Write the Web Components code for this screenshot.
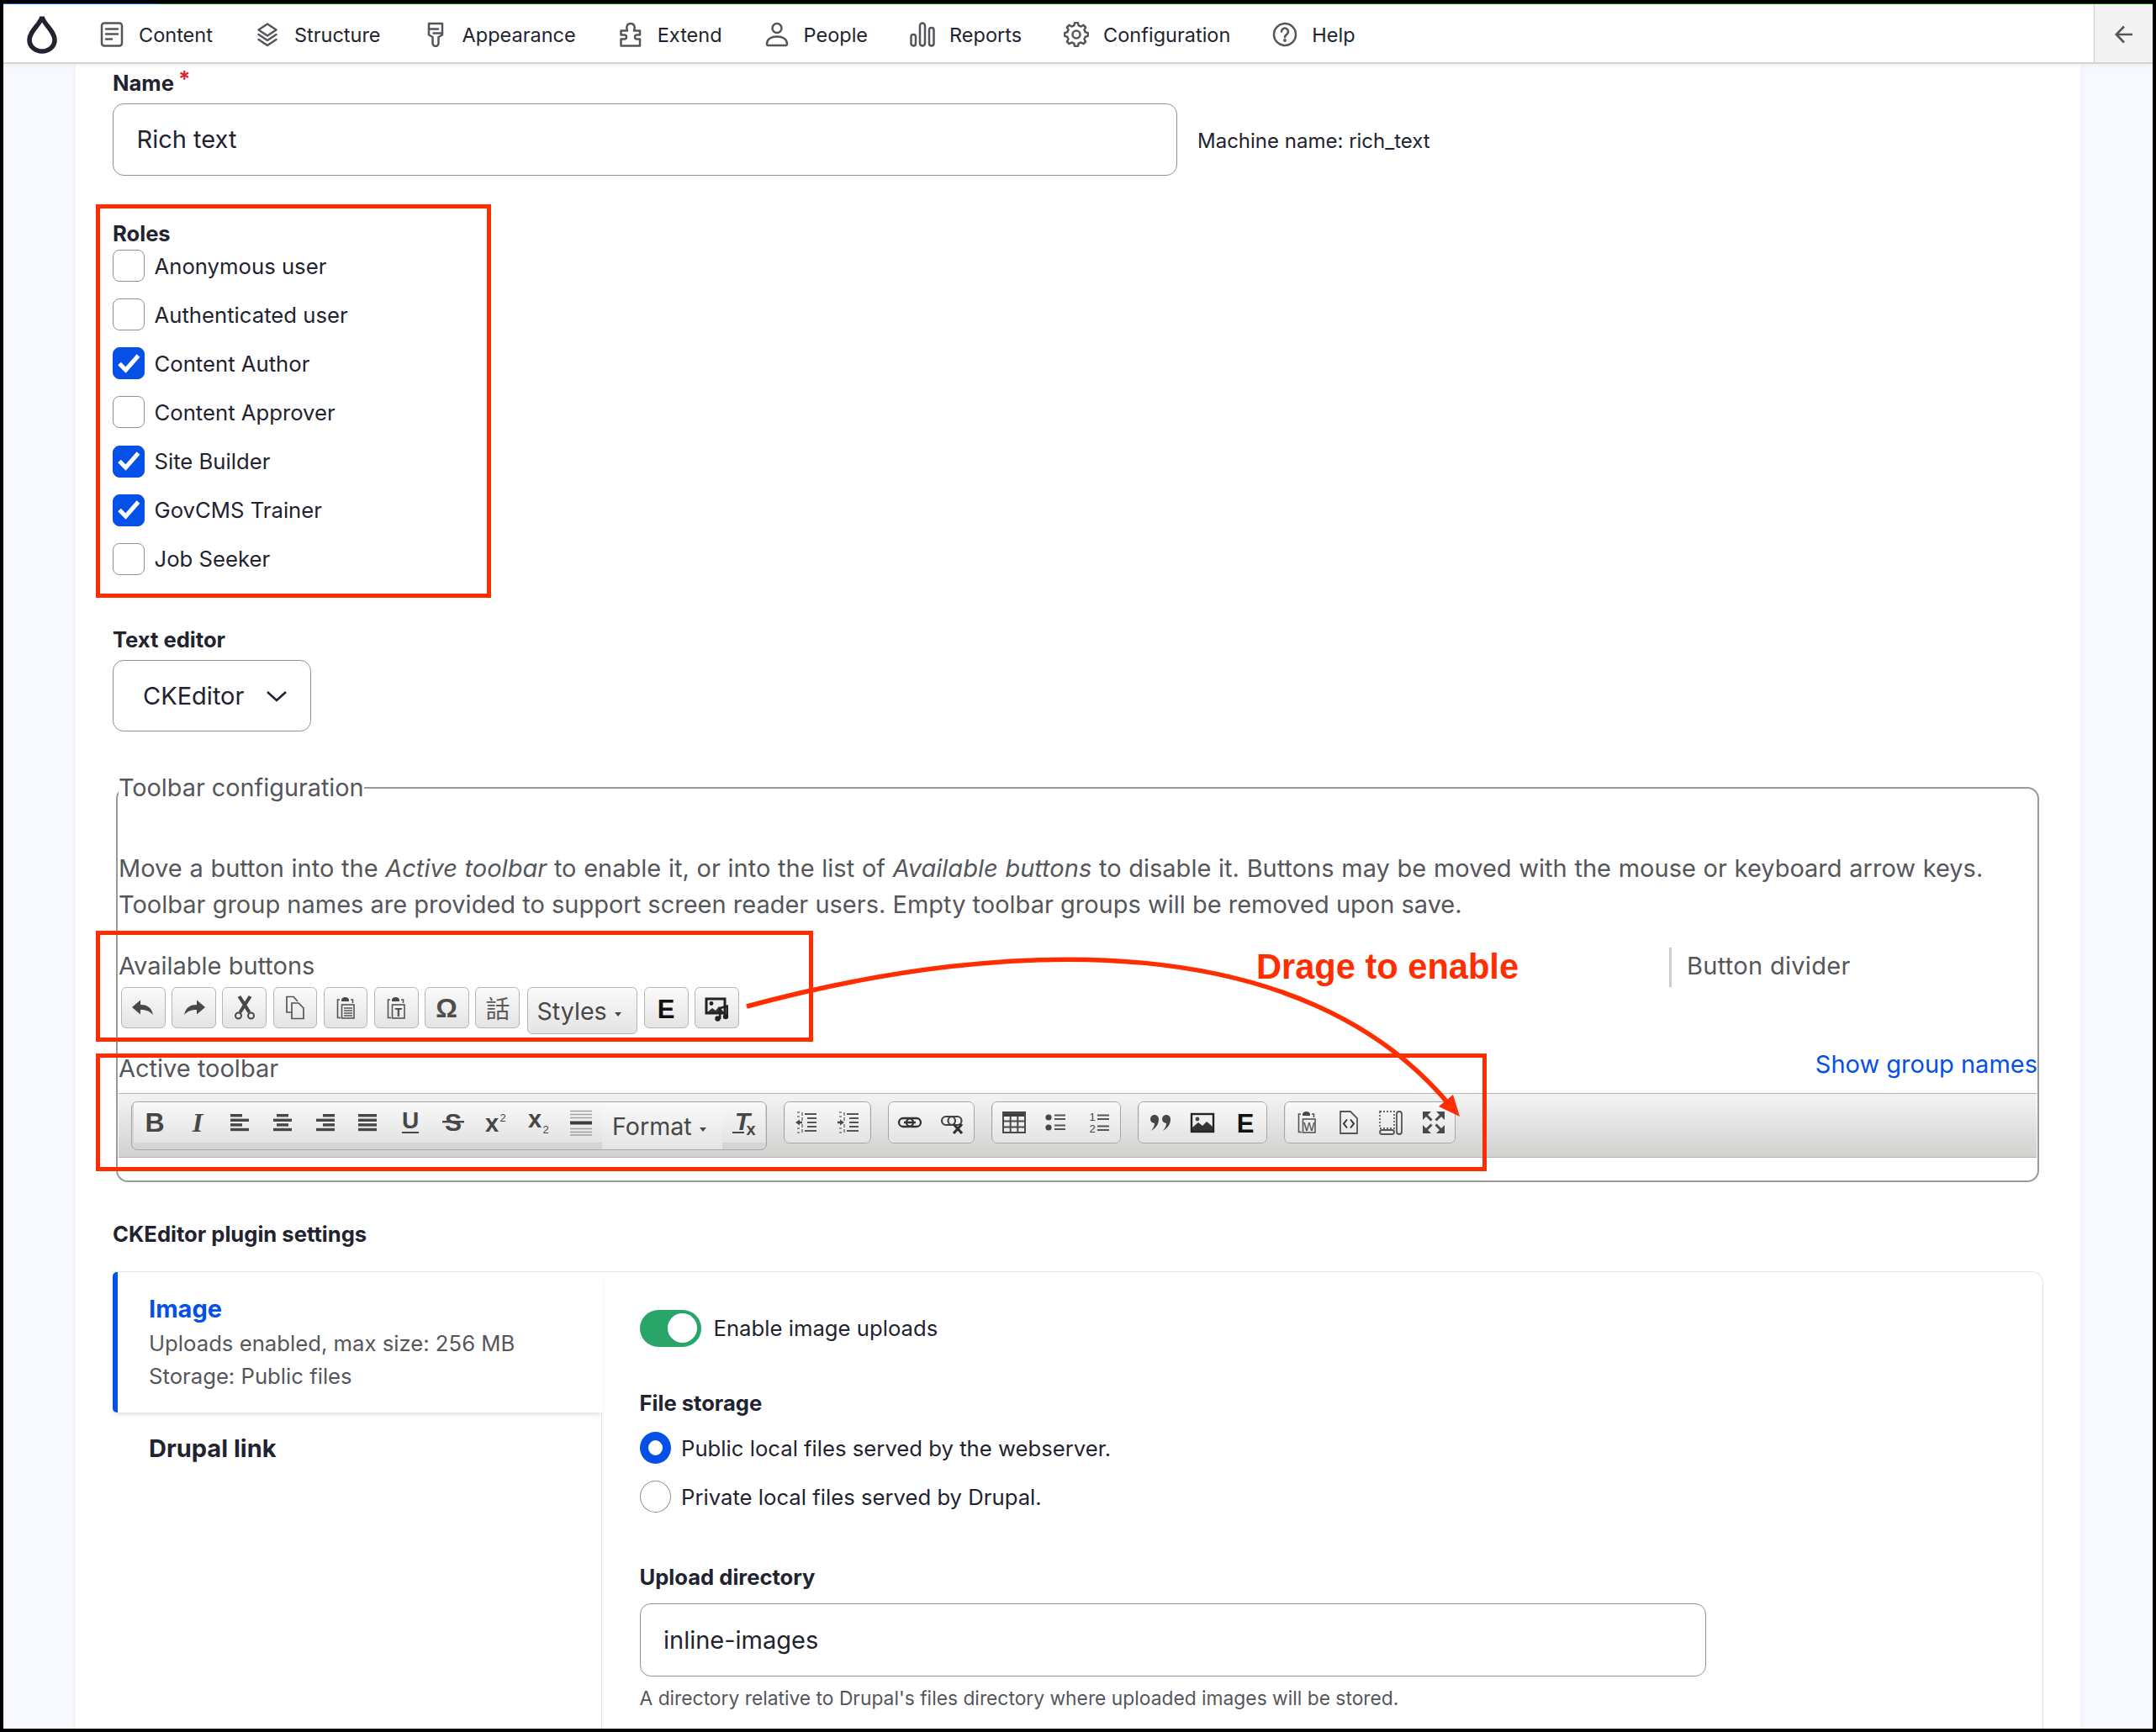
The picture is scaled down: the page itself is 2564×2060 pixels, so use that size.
<!doctype html>
<html>
<head>
<meta charset="utf-8">
<title>Rich text</title>
<style>
  html, body { margin: 0; padding: 0; background: #000; }
  body { position: relative; width: 2564px; height: 2060px; overflow: hidden; font-family: Inter, "Liberation Sans", sans-serif; color: #222330; }
</style>
</head>
<body>
<x-app>
  <x-admin-bar>
    <x-nav-item icon="content">Content</x-nav-item>
    <x-nav-item icon="structure">Structure</x-nav-item>
    <x-nav-item icon="appearance">Appearance</x-nav-item>
    <x-nav-item icon="extend">Extend</x-nav-item>
    <x-nav-item icon="people">People</x-nav-item>
    <x-nav-item icon="reports">Reports</x-nav-item>
    <x-nav-item icon="config">Configuration</x-nav-item>
    <x-nav-item icon="help">Help</x-nav-item>
  </x-admin-bar>
  <x-format-form></x-format-form>
</x-app>
<x-annotations></x-annotations>

<script>
// gear outline for the Configuration item
function gearPath(cx, cy, r1, r2, teeth) {
  let d = '';
  const step = Math.PI * 2 / teeth;
  for (let i = 0; i < teeth; i++) {
    const a = i * step - Math.PI / 2;
    const pts = [[a - step * .32, r1], [a - step * .17, r2], [a + step * .17, r2], [a + step * .32, r1]];
    pts.forEach((p, j) => {
      const x = (cx + Math.cos(p[0]) * p[1]).toFixed(1);
      const y = (cy + Math.sin(p[0]) * p[1]).toFixed(1);
      d += (i === 0 && j === 0 ? 'M' : 'L') + x + ' ' + y + ' ';
    });
  }
  return d + 'Z';
}

const NAV_ICONS = {
  content: '<rect x="3" y="1.5" width="24" height="27" rx="3"/><path d="M8 8.5H22M8 14.5H22M8 20.5H15"/>',
  structure: '<path d="M15 2.5 25.5 9.5 15 16.5 4.5 9.5Z"/><path d="M4.5 15 15 22 25.5 15M4.5 21 15 28 25.5 21"/>',
  appearance: '<path d="M7 2h16v13.5l-4.5 2.5v7.5a3.5 3.5 0 0 1-7 0V18L7 15.5Z"/><path d="M7 8.5h11M12.5 13.5H23"/>',
  extend: '<path d="M3.5 28.5V20.5H7.5a2.5 2.5 0 0 0 0-5H3.5V10.5H11C9 6 11 2 15 2S21 6 19 10.5H26V15.5H22.5a2.5 2.5 0 0 0 0 5H26V28.5Z"/>',
  people: '<circle cx="15" cy="7.5" r="5.5"/><path d="M3 26.5c0-6 5-9 12-9s12 3 12 9a1.5 1.5 0 0 1-1.5 1.5h-21A1.5 1.5 0 0 1 3 26.5Z"/>',
  reports: '<rect x="1.5" y="15" width="5.5" height="13.5" rx="2.7"/><rect x="12" y="1.5" width="6" height="27" rx="3"/><rect x="23" y="7" width="5.5" height="21.5" rx="2.7"/>',
  config: `<path d="${gearPath(15, 15, 11, 14, 8)}"/><circle cx="15" cy="15" r="4.5"/>`,
  help: '<circle cx="15" cy="15" r="13"/><path d="M11 11.5a4 4 0 1 1 6.2 3.4c-1.5 1-2.2 1.6-2.2 3.4"/><circle cx="15" cy="22" r=".8"/>'
};

const bars = rows => rows.map((r, i) => `<rect x="${r[0]}" y="${6 + i * 5.6}" width="${r[1]}" height="3.4"/>`).join('');
const txt = (s, x, y, size, extra = '') => `<text x="${x}" y="${y}" font-size="${size}" ${extra}>${s}</text>`;
const SANS = 'font-family="Liberation Sans" font-weight="700"';
const clip = '<path d="M9 6H6.5V27.5H10" fill="none" stroke-width="1.6" stroke="#555"/><path d="M22 6H24.5V10" fill="none" stroke-width="1.6" stroke="#555"/><path d="M11 6.5c0-2 2-3.5 4.5-3.5s4.5 1.5 4.5 3.5V8H11Z"/><rect x="11.5" y="12" width="14.5" height="16" fill="none" stroke="#555" stroke-width="1.6"/>';

const CK_ICONS = {
  undo: '<path d="M3 15 13 6.5V12C21 12 26 15 28 24 24 19.5 19 18 13 18V23.5Z"/>',
  redo: '<path d="M29 15 19 6.5V12C11 12 6 15 4 24 8 19.5 13 18 19 18V23.5Z"/>',
  cut: '<path d="M9.5 2 21.5 21M22.5 2 10.5 21" stroke="#474747" stroke-width="4.2"/><circle cx="8.5" cy="25" r="3.5" fill="none" stroke="#474747" stroke-width="2"/><circle cx="23.5" cy="25" r="3.5" fill="none" stroke="#474747" stroke-width="2"/>',
  copy: '<g fill="none" stroke="#555" stroke-width="1.7"><path d="M12 21H6V2.5H14L19 8"/><path d="M12 10H20L26 16V28.5H12Z"/></g>',
  paste: clip + '<path d="M14 16H24M14 19H24M14 22H24M14 25H24" stroke="#555" stroke-width="1.5"/>',
  pastetext: clip + txt('T', 14.5, 26, 14, SANS + ' fill="#474747"'),
  omega: txt('Ω', 16, 27, 32, 'text-anchor="middle" font-family="Liberation Sans" font-weight="700" fill="#4d4d4d"'),
  language: txt('話', 16, 28, 29, 'text-anchor="middle" font-family="Noto Sans CJK TC" fill="#5a5a5a"'),
  e: txt('E', 16, 28, 31, 'text-anchor="middle" ' + SANS + ' fill="#111"'),
  media: '<rect x="3" y="5" width="22" height="17" fill="#eee" stroke="#222" stroke-width="3"/><circle cx="9" cy="10.5" r="2.4" fill="#222"/><path d="M4 21l6-5 4 3 4-5 6 7Z" fill="#333"/><path d="M18 15l11-3v14h-2.5V15.5l-6 1.6V29H18Z" fill="#222"/><circle cx="16.5" cy="28.5" r="3.2" fill="#222"/><circle cx="26" cy="26" r="3.2" fill="#222"/>',
  bold: txt('B', 16, 27, 32, 'text-anchor="middle" ' + SANS),
  italic: txt('I', 16, 27, 32, 'text-anchor="middle" font-family="Liberation Serif" font-weight="700" font-style="italic"'),
  left: bars([[5, 14], [5, 22], [5, 14], [5, 22]]),
  center: bars([[9, 14], [5, 22], [9, 14], [5, 22]]),
  right: bars([[13, 14], [5, 22], [13, 14], [5, 22]]),
  justify: bars([[5, 22], [5, 22], [5, 22], [5, 22]]),
  underline: txt('U', 16, 23, 28, 'text-anchor="middle" ' + SANS) + '<rect x="6" y="27" width="20" height="2"/>',
  strike: txt('S', 16, 26, 30, 'text-anchor="middle" ' + SANS) + '<rect x="3" y="14" width="26" height="2.4"/>',
  sup: txt('x', 12, 27, 29, 'text-anchor="middle" ' + SANS) + txt('2', 25, 15, 13, 'text-anchor="middle" font-family="Liberation Sans"'),
  sub: txt('x', 12, 22, 29, 'text-anchor="middle" ' + SANS) + txt('2', 25, 29, 13, 'text-anchor="middle" font-family="Liberation Sans"'),
  hr: '<path d="M3 2.5H29M3 6.5H29M3 10.5H29M3 23.5H29M3 27.5H29M3 31H29" stroke="#a0a0a0" stroke-width="1.6"/><rect x="3" y="14.5" width="26" height="4" fill="#3c3c3c"/>',
  clear: txt('T', 15, 25, 30, SANS + ' font-style="italic" text-anchor="middle" font-family="Liberation Serif"') + '<rect x="3" y="27" width="14" height="2"/>' + txt('x', 25, 31, 20, 'text-anchor="middle" ' + SANS),
  outdent: '<path d="M14 6H28M17 11H28M17 16H28M17 21H28M14 26H28" stroke="#555" stroke-width="2"/><path d="M11 4V8M11 10V14M11 18V22M11 24V28M5 4H8M5 9H8M5 23H8M5 28H8" stroke="#777" stroke-width="1.5"/><path d="M3 16 8 12.5V14.8H11V17.2H8V19.5Z"/>',
  indent: '<path d="M14 6H28M17 11H28M17 16H28M17 21H28M14 26H28" stroke="#555" stroke-width="2"/><path d="M11 4V8M11 10V14M11 18V22M11 24V28M5 4H8M5 9H8M5 23H8M5 28H8" stroke="#777" stroke-width="1.5"/><path d="M11 16 6 12.5V14.8H3V17.2H6V19.5Z"/>',
  link: '<g fill="none" stroke="#333" stroke-width="2.3"><rect x="3" y="11" width="17" height="10" rx="5"/><rect x="12" y="11" width="17" height="10" rx="5"/></g><path d="M9 16H23" stroke="#333" stroke-width="2.3"/>',
  unlink: '<g fill="none" stroke="#444" stroke-width="2.2"><rect x="3" y="9" width="16" height="10" rx="5"/><rect x="10.5" y="9" width="16" height="10" rx="5"/></g><path d="M17 18 27 29M27 18 17 29" stroke="#333" stroke-width="3.2"/>',
  table: '<rect x="2" y="3" width="28" height="6" fill="#3e3e3e"/><g fill="none" stroke="#4a4a4a" stroke-width="2"><rect x="3" y="5" width="26" height="23"/><path d="M11.7 8V28M20.3 8V28M3 14.5H29M3 21.5H29"/></g>',
  bullets: '<circle cx="7" cy="10" r="3.6"/><circle cx="7" cy="22" r="3.6"/><path d="M14 7.5H27M14 12H27M14 19.5H27M14 24H27" stroke="#555" stroke-width="2"/>',
  numbers: txt('1', 8, 14, 13, 'text-anchor="middle" font-family="Liberation Sans"') + txt('2', 8, 28, 13, 'text-anchor="middle" font-family="Liberation Sans"') + '<path d="M14 7.5H28M14 12H28M14 20.5H28M14 25H28" stroke="#555" stroke-width="2"/>',
  quote: '<circle cx="9" cy="12" r="5"/><path d="M14 12C14 19 10 23 5 26 8 22 9.5 19 9 16Z"/><circle cx="23" cy="12" r="5"/><path d="M28 12C28 19 24 23 19 26 22 22 23.5 19 23 16Z"/>',
  image: '<rect x="3" y="6" width="26" height="21" fill="none" stroke="#222" stroke-width="2.4"/><circle cx="10" cy="12" r="2.4"/><path d="M4 26V22L11 16 16 20 21 15 28 21V26Z" fill="#333"/>',
  paste_word: clip + txt('W', 18.8, 26, 14, 'text-anchor="middle" font-family="Liberation Sans" fill="#474747"'),
  source: '<path d="M6 3H18L26 11V29H6Z" fill="none" stroke="#555" stroke-width="1.8"/><path d="M14 12.5 10 17.5 14 22.5M18 12.5 22 17.5 18 22.5" fill="none" stroke="#333" stroke-width="2"/>',
  blocks: '<rect x="3" y="3" width="17" height="20" fill="none" stroke="#666" stroke-width="1.8" stroke-dasharray="2 2"/><rect x="23" y="3" width="6" height="27" rx="3" fill="none" stroke="#555" stroke-width="1.8"/><rect x="3" y="25" width="17" height="5" rx="2.5" fill="none" stroke="#555" stroke-width="1.8"/>',
  maximize: '<g fill="#4a4a4a"><path d="M3 3H13L3 13ZM29 3V13L19 3ZM3 29V19L13 29ZM29 29H19L29 19Z"/></g><path d="M6 6 13.5 13.5M26 6 18.5 13.5M6 26 13.5 18.5M26 26 18.5 18.5" stroke="#4a4a4a" stroke-width="3"/>'
};

class App extends HTMLElement {
  constructor() {
    super();
    this.attachShadow({ mode: 'open' }).innerHTML = `
      <style>
        :host { display: flex; flex-direction: column; box-sizing: border-box; width: 2564px; height: 2060px; border: 4px solid #000; background: #f8f9fe; overflow: hidden; }
      </style>
      <slot></slot>`;
  }
}

class AdminBar extends HTMLElement {
  constructor() {
    super();
    this.attachShadow({ mode: 'open' }).innerHTML = `
      <style>
        :host { display: flex; flex: none; align-items: stretch; box-sizing: border-box; height: 72px; background: #fff; position: relative; z-index: 2;
          border-bottom: 2px solid #d4d4d4; box-shadow: 0 2px 6px rgba(0,0,0,.05); }
        .line { position: absolute; left: 0; right: 0; top: 0; height: 1px; background: linear-gradient(90deg, #0550e6 184px, #006400 184px); }
        .logo { flex: none; width: 38px; height: 48px; margin: 12px 49px 0 27px; }
        nav { display: flex; align-items: center; gap: 50px; padding-top: 4px; }
        .back { margin-left: auto; flex: none; width: 70px; display: flex; align-items: center; justify-content: center; padding-top: 3px; background: #f3f3f3; border-left: 1.5px solid #ccc; box-sizing: border-box; }
      </style>
      <div class="line"></div>
      <svg class="logo" viewBox="0 0 38 48" fill="none" stroke="#222330" stroke-width="5.6">
        <path d="M19 4C17 13 4 21 4 31.5 4 39.5 11 45 19 45S34 39.5 34 31.5C34 21 21 13 19 4Z"/>
      </svg>
      <nav><slot></slot></nav>
      <div class="back">
        <svg width="24" height="24" viewBox="0 0 24 24" fill="none" stroke="#55565b" stroke-width="2.6"><path d="M22 12H3M12 2.5 2.8 12 12 21.5"/></svg>
      </div>`;
  }
}

class NavItem extends HTMLElement {
  constructor() {
    super();
    this.attachShadow({ mode: 'open' }).innerHTML = `
      <style>
        :host { display: flex; align-items: center; gap: 17px; font-size: 23.5px; color: #222330; white-space: nowrap; }
        svg { flex: none; width: 30px; height: 30px; }
      </style>
      <svg viewBox="0 0 30 30" fill="none" stroke="#55565b" stroke-width="2.5" stroke-linejoin="round" stroke-linecap="round">${NAV_ICONS[this.getAttribute('icon')]}</svg>
      <slot></slot>`;
  }
}

class Label extends HTMLElement {
  constructor() {
    super();
    this.attachShadow({ mode: 'open' }).innerHTML = `
      <style>
        :host { display: block; font-size: 25.6px; font-weight: 700; line-height: 30px; color: #222330; }
        :host([required]) .star { display: inline; }
        .star { display: none; color: #d8242f; margin-left: 5px; vertical-align: 5px; font-size: 26px; line-height: 0; }
      </style>
      <slot></slot><span class="star">*</span>`;
  }
}

class TextBox extends HTMLElement {
  constructor() {
    super();
    this.attachShadow({ mode: 'open' }).innerHTML = `
      <style>
        :host { display: flex; align-items: center; box-sizing: border-box; height: 86px; padding: 0 27.5px; border: 1.5px solid #8e929c; border-radius: 13px; background: #fff; font-size: 29px; color: #222330; }
      </style>
      <slot></slot>`;
  }
}

class SelectBox extends HTMLElement {
  constructor() {
    super();
    this.attachShadow({ mode: 'open' }).innerHTML = `
      <style>
        :host { display: flex; align-items: center; justify-content: space-between; box-sizing: border-box; width: 236px; height: 85px; padding: 0 27px 0 35px; border: 1.5px solid #8e929c; border-radius: 13px; font-size: 29px; color: #222330; }
      </style>
      <slot></slot>
      <svg width="26" height="14" viewBox="0 0 26 14" fill="none" stroke="#222330" stroke-width="2.6"><path d="M2 2 13 12 24 2"/></svg>`;
  }
}

class CheckBox extends HTMLElement {
  constructor() {
    super();
    this.attachShadow({ mode: 'open' }).innerHTML = `
      <style>
        :host { display: flex; align-items: center; gap: 11.5px; height: 38px; font-size: 25.7px; color: #222330; }
        .box { flex: none; box-sizing: border-box; width: 38px; height: 38px; border: 1.5px solid #8e929c; border-radius: 8px; background: #fff; }
        svg { display: none; }
        :host([checked]) .box { background: #0550e6; border-color: #0550e6; }
        :host([checked]) svg { display: block; margin: -1.5px; }
      </style>
      <div class="box"><svg width="38" height="38" viewBox="0 0 38 38" fill="none" stroke="#fff" stroke-width="5"><path d="M8 19.5 15.5 27 30.5 10"/></svg></div>
      <slot></slot>`;
  }
}

class RadioBox extends HTMLElement {
  constructor() {
    super();
    this.attachShadow({ mode: 'open' }).innerHTML = `
      <style>
        :host { display: flex; align-items: center; gap: 12.5px; height: 38px; font-size: 25.7px; color: #222330; }
        .dot { flex: none; box-sizing: border-box; width: 37px; height: 38px; border-radius: 50%; border: 1.5px solid #8e929c; background: #fff; }
        :host([checked]) .dot { border: 10px solid #0550e6; }
      </style>
      <div class="dot"></div>
      <slot></slot>`;
  }
}

class ToggleSwitch extends HTMLElement {
  constructor() {
    super();
    this.attachShadow({ mode: 'open' }).innerHTML = `
      <style>
        :host { display: flex; align-items: center; gap: 15px; font-size: 25.7px; color: #222330; }
        .track { flex: none; display: flex; justify-content: flex-end; align-items: center; box-sizing: border-box; width: 73px; height: 44px; padding-right: 5px; border-radius: 22px; background: #2aa56a; }
        .knob { width: 35px; height: 35px; border-radius: 50%; background: #fff; }
      </style>
      <div class="track"><div class="knob"></div></div>
      <slot></slot>`;
  }
}

class CkButton extends HTMLElement {
  constructor() {
    super();
    this.attachShadow({ mode: 'open' }).innerHTML = `
      <style>
        :host { display: flex; flex: none; align-items: center; justify-content: center; box-sizing: border-box; width: var(--ck-w, 50.7px); height: 48px; background: linear-gradient(#f9f9f9, #e3e3e3); }
        :host([boxed]) { width: 52.7px; height: 49px; border: 1px solid #b6b6b6; border-radius: 6px; background: linear-gradient(#fafafa, #e4e4e4); }
        svg { width: 32px; height: 32px; fill: #474747; overflow: visible; }
      </style>
      <svg viewBox="0 0 32 32">${CK_ICONS[this.getAttribute('icon')]}</svg>`;
  }
}

class CkCombo extends HTMLElement {
  constructor() {
    super();
    this.attachShadow({ mode: 'open' }).innerHTML = `
      <style>
        :host { display: flex; flex: none; align-items: center; gap: 9px; box-sizing: border-box; width: 143px; height: 56px; padding-left: 12px; font-size: 28.6px; color: #474747; background: linear-gradient(#f9f9f9, #e5e5e5); }
        :host([boxed]) { width: 131px; border: 1px solid #b6b6b6; border-radius: 6px; padding-left: 11px; background: linear-gradient(#fafafa, #e4e4e4); }
        .caret { width: 0; height: 0; margin-top: 9px; border: 4.5px solid transparent; border-top: 5px solid #474747; border-bottom: 0; }
      </style>
      <slot></slot><span class="caret"></span>`;
  }
}

class CkGroup extends HTMLElement {
  constructor() {
    super();
    this.attachShadow({ mode: 'open' }).innerHTML = `
      <style>
        :host { --ck-w: 50.3px; display: flex; flex: none; align-items: flex-start; align-self: flex-start; box-sizing: border-box; padding: 0 .5px; border: 1px solid #a6a6a6; border-radius: 7px; background: #e3e3e3; overflow: hidden; }
        :host([tall]) { --ck-w: 50.7px; padding: 0 1.5px; background: #d5d5d5; }
      </style>
      <slot></slot>`;
  }
}

class CkBar extends HTMLElement {
  constructor() {
    super();
    this.attachShadow({ mode: 'open' }).innerHTML = `
      <style>
        :host { display: flex; gap: 20px; box-sizing: border-box; height: 77px; padding: 9px 0 0 15px; border-top: 1.5px solid #b4b4b4; border-bottom: 1.5px solid #b4b4b4; background: linear-gradient(#f3f3f3, #d0d2cf); }
      </style>
      <slot></slot>`;
  }
}

class VerticalTab extends HTMLElement {
  constructor() {
    super();
    this.attachShadow({ mode: 'open' }).innerHTML = `
      <style>
        :host { display: block; box-sizing: border-box; padding: 20.5px 0 0 43px; }
        :host([active]) { height: 167px; padding: 22px 0 0 37px; border-left: 6px solid #0550e6; border-radius: 5px 0 0 5px; background: #fff; box-shadow: 0 4px 6px -2px rgba(0,0,0,.14); position: relative; z-index: 1; margin-right: -2px; }
        .title { font-size: 29px; font-weight: 700; line-height: 43px; color: #222330; }
        :host([active]) .title { color: #0550e6; }
        .sum { font-size: 25.7px; line-height: 39px; color: #55565b; }
      </style>
      <div class="title">${this.getAttribute('title')}</div>
      <div class="sum"><slot></slot></div>`;
    this.removeAttribute('title');
  }
}

class FormatForm extends HTMLElement {
  constructor() {
    super();
    this.attachShadow({ mode: 'open' }).innerHTML = `
      <style>
        :host { display: block; flex: 1; box-sizing: border-box; width: 2384px; margin-left: 86px; padding: 8px 0 0 44px; background: #fff; box-shadow: 0 0 8px rgba(0,0,20,.06); }
        .name-row { display: flex; align-items: center; gap: 24px; margin-top: 8.5px; font-size: 24px; }
        .name-row span { padding-top: 3px; }
        .name-row x-text-box { width: 1266px; }
        .roles { display: flex; flex-direction: column; gap: 20.17px; margin-top: 4.5px; }
        fieldset { box-sizing: border-box; width: 2287px; margin: 49px 0 0 4px; padding: 0 0 27px 1px; border: 2px solid #9a9a9a; border-radius: 14px; min-width: 0; color: #55565b; font-size: 29px; }
        legend { padding: 0; line-height: 35px; font-size: 28.8px; }
        .desc { margin: 56.5px 0 0; line-height: 43px; white-space: nowrap; }
        .desc .first { word-spacing: .57px; }
        .avail-head { display: flex; justify-content: space-between; height: 47px; margin-top: 30.5px; line-height: 43px; }
        .avail-head > span:last-child { display: block; width: 397px; margin-right: 41px; border-left: 3.5px solid #ccc; padding-left: 18px; height: 47px; box-sizing: border-box; letter-spacing: .3px; }
        .avail { display: flex; align-items: flex-start; gap: 7.5px; padding-left: 3px; height: 56px; }
        .avail .wide { margin: 0 1px; }
        .active-head { display: flex; justify-content: space-between; align-items: flex-start; height: 43px; margin-top: 14px; line-height: 43px; }
        .active-head span { padding-top: 5px; }
        a { color: #0550e6; text-decoration: none; }
        .active-head + x-ck-bar { margin-top: 13px; margin-right: 1px; }
        .section { margin-top: 47px; }
        .vtabs { display: grid; grid-template-columns: 581px 1fr; height: 600px; margin-top: 29px; width: 2296px; box-sizing: border-box; border-top: 1.5px solid #e6e6e6; border-right: 1.5px solid #e6e6e6; border-top-right-radius: 14px; }
        .panel { border-left: 1.5px solid #e6e6e6; padding: 44.5px 0 0 44.5px; }
        .storage { margin-top: 52.5px; }
        .radios { display: flex; flex-direction: column; gap: 20px; margin-top: 19px; }
        .upload { margin-top: 62px; }
        .upload + x-text-box { width: 1268px; height: 87px; margin-top: 16px; }
        .help { margin-top: 13px; font-size: 22.8px; line-height: 26px; color: #55565b; }
      </style>
      <x-field-label required>Name</x-field-label>
      <div class="name-row"><x-text-box>Rich text</x-text-box><span>Machine name: rich_text</span></div>

      <x-field-label style="margin-top:54px">Roles</x-field-label>
      <div class="roles">
        <x-check-box>Anonymous user</x-check-box>
        <x-check-box>Authenticated user</x-check-box>
        <x-check-box checked>Content Author</x-check-box>
        <x-check-box>Content Approver</x-check-box>
        <x-check-box checked>Site Builder</x-check-box>
        <x-check-box checked>GovCMS Trainer</x-check-box>
        <x-check-box>Job Seeker</x-check-box>
      </div>

      <x-field-label style="margin:62.5px 0 9px">Text editor</x-field-label>
      <x-select-box>CKEditor</x-select-box>

      <fieldset>
        <legend>Toolbar configuration</legend>
        <p class="desc"><span class="first">Move a button into the <em>Active toolbar</em> to enable it, or into the list of <em>Available buttons</em> to disable it. Buttons may be moved with the mouse or keyboard arrow keys.</span><br>Toolbar group names are provided to support screen reader users. Empty toolbar groups will be removed upon save.</p>

        <div class="avail-head"><span>Available buttons</span><span>Button divider</span></div>
        <div class="avail">
          <x-ck-button boxed icon="undo"></x-ck-button>
          <x-ck-button boxed icon="redo"></x-ck-button>
          <x-ck-button boxed icon="cut"></x-ck-button>
          <x-ck-button boxed icon="copy"></x-ck-button>
          <x-ck-button boxed icon="paste"></x-ck-button>
          <x-ck-button boxed icon="pastetext"></x-ck-button>
          <x-ck-button boxed icon="omega"></x-ck-button>
          <x-ck-button boxed icon="language"></x-ck-button>
          <x-ck-combo boxed class="wide">Styles</x-ck-combo>
          <x-ck-button boxed icon="e"></x-ck-button>
          <x-ck-button boxed icon="media"></x-ck-button>
        </div>

        <div class="active-head"><span>Active toolbar</span><a href="#">Show group names</a></div>
        <x-ck-bar>
          <x-ck-group tall>
            <x-ck-button icon="bold"></x-ck-button>
            <x-ck-button icon="italic"></x-ck-button>
            <x-ck-button icon="left"></x-ck-button>
            <x-ck-button icon="center"></x-ck-button>
            <x-ck-button icon="right"></x-ck-button>
            <x-ck-button icon="justify"></x-ck-button>
            <x-ck-button icon="underline"></x-ck-button>
            <x-ck-button icon="strike"></x-ck-button>
            <x-ck-button icon="sup"></x-ck-button>
            <x-ck-button icon="sub"></x-ck-button>
            <x-ck-button icon="hr"></x-ck-button>
            <x-ck-combo>Format</x-ck-combo>
            <x-ck-button icon="clear"></x-ck-button>
          </x-ck-group>
          <x-ck-group><x-ck-button icon="outdent"></x-ck-button><x-ck-button icon="indent"></x-ck-button></x-ck-group>
          <x-ck-group><x-ck-button icon="link"></x-ck-button><x-ck-button icon="unlink"></x-ck-button></x-ck-group>
          <x-ck-group><x-ck-button icon="table"></x-ck-button><x-ck-button icon="bullets"></x-ck-button><x-ck-button icon="numbers"></x-ck-button></x-ck-group>
          <x-ck-group><x-ck-button icon="quote"></x-ck-button><x-ck-button icon="image"></x-ck-button><x-ck-button icon="e"></x-ck-button></x-ck-group>
          <x-ck-group><x-ck-button icon="paste_word"></x-ck-button><x-ck-button icon="source"></x-ck-button><x-ck-button icon="blocks"></x-ck-button><x-ck-button icon="maximize"></x-ck-button></x-ck-group>
        </x-ck-bar>
      </fieldset>

      <x-field-label class="section">CKEditor plugin settings</x-field-label>
      <div class="vtabs">
        <div>
          <x-vertical-tab active title="Image">Uploads enabled, max size: 256 MB<br>Storage: Public files</x-vertical-tab>
          <x-vertical-tab title="Drupal link"></x-vertical-tab>
        </div>
        <div class="panel">
          <x-toggle-switch>Enable image uploads</x-toggle-switch>
          <x-field-label class="storage">File storage</x-field-label>
          <div class="radios">
            <x-radio-box checked>Public local files served by the webserver.</x-radio-box>
            <x-radio-box>Private local files served by Drupal.</x-radio-box>
          </div>
          <x-field-label class="upload">Upload directory</x-field-label>
          <x-text-box>inline-images</x-text-box>
          <div class="help">A directory relative to Drupal's files directory where uploaded images will be stored.</div>
        </div>
      </div>`;
  }
}

// red callouts drawn over the screenshot, free canvas
class Annotations extends HTMLElement {
  constructor() {
    super();
    this.attachShadow({ mode: 'open' }).innerHTML = `
      <style>
        :host { position: absolute; left: 0; top: 0; width: 2564px; height: 2060px; pointer-events: none; z-index: 5; }
        svg { display: block; }
        text { font: 700 41.6px "Liberation Sans", sans-serif; fill: #ff2d00; }
      </style>
      <svg width="2564" height="2060" viewBox="0 0 2564 2060" fill="none" stroke="#ff2d00" stroke-width="5">
        <rect x="116.5" y="245.5" width="465" height="463"/>
        <rect x="116.5" y="1109.5" width="848" height="127"/>
        <rect x="116.5" y="1255.5" width="1649" height="135"/>
        <path d="M888 1197C1210 1110 1550 1108 1722 1312" stroke-width="5.5"/>
        <polygon points="1736,1328 1711,1316 1728,1302" fill="#ff2d00" stroke="none"/>
        <text x="1494" y="1164" stroke="none">Drage to enable</text>
      </svg>`;
  }
}

customElements.define('x-app', App);
customElements.define('x-admin-bar', AdminBar);
customElements.define('x-nav-item', NavItem);
customElements.define('x-field-label', Label);
customElements.define('x-text-box', TextBox);
customElements.define('x-select-box', SelectBox);
customElements.define('x-check-box', CheckBox);
customElements.define('x-radio-box', RadioBox);
customElements.define('x-toggle-switch', ToggleSwitch);
customElements.define('x-ck-button', CkButton);
customElements.define('x-ck-combo', CkCombo);
customElements.define('x-ck-group', CkGroup);
customElements.define('x-ck-bar', CkBar);
customElements.define('x-vertical-tab', VerticalTab);
customElements.define('x-format-form', FormatForm);
customElements.define('x-annotations', Annotations);
</script>
</body>
</html>
